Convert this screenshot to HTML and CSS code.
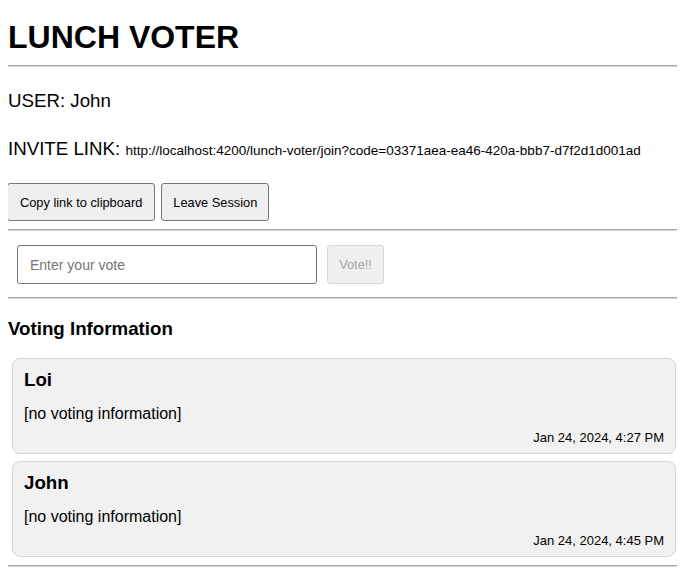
FILE: index.html
```html
<!DOCTYPE html>
<html>
<head>
<meta charset="utf-8">
<title>Lunch Voter</title>
<link rel="stylesheet" href="styles.css">
</head>
<body>
<h1 class="title">LUNCH VOTER</h1>
<hr class="rule rule-top">
<div class="user">USER: John</div>
<div class="invite">INVITE LINK: <span class="invite-url">http://localhost:4200/lunch-voter/join?code=03371aea-ea46-420a-bbb7-d7f2d1d001ad</span></div>
<div class="actions">
  <button class="btn">Copy link to clipboard</button>
  <button class="btn">Leave Session</button>
</div>
<hr class="rule rule-actions">
<form class="vote-form">
  <input class="vote-input" type="text" placeholder="Enter your vote">
  <button class="btn vote-btn" type="button" disabled>Vote!!</button>
</form>
<hr class="rule rule-form">
<h3 class="section-title">Voting Information</h3>
<div class="cards">
  <div class="card">
    <div class="card-name">Loi</div>
    <div class="card-info">[no voting information]</div>
    <div class="card-date">Jan 24, 2024, 4:27 PM</div>
  </div>
  <div class="card">
    <div class="card-name">John</div>
    <div class="card-info">[no voting information]</div>
    <div class="card-date">Jan 24, 2024, 4:45 PM</div>
  </div>
</div>
<hr class="rule rule-bottom">
</body>
</html>
```
FILE: styles.css
```css
html, body {
  background: #ffffff;
}
body {
  margin: 8px;
  font-family: "Liberation Sans", Arial, sans-serif;
  color: #000;
}
.title {
  margin: 11px 0 0;
  font-size: 32px;
  line-height: 37px;
  font-weight: bold;
}
.rule {
  border: 0;
  border-top: 1px solid #a8a8a8;
  border-bottom: 1px solid #d4d4d4;
  height: 0;
  margin: 0;
}
.rule-top { margin-top: 9px; }
.user {
  margin-top: 23px;
  font-size: 18.72px;
  line-height: 22px;
}
.invite {
  margin-top: 26px;
  font-size: 18.72px;
  line-height: 22px;
  height: 22px;
}
.invite-url {
  font-size: 13.5px;
  line-height: 1;
}
.actions {
  display: flex;
  gap: 6px;
  margin-top: 23px;
}
.btn {
  font-family: "Liberation Sans", Arial, sans-serif;
  font-size: 12.8px;
  height: 38px;
  padding: 0 11px;
  background: #efefef;
  border: 1px solid #767676;
  border-radius: 3px;
  color: #000;
}
.actions .btn:first-child { margin-left: -1px; padding: 0 12px; }
.rule-actions { margin-top: 8px; }
.vote-form {
  display: flex;
  gap: 10px;
  margin: 14px 0 0 9px;
}
.vote-input {
  box-sizing: border-box;
  width: 300px;
  height: 39px;
  padding: 0 12px;
  border: 1px solid #767676;
  border-radius: 3px;
  font-family: "Liberation Sans", Arial, sans-serif;
  font-size: 14px;
  margin: 0;
}
.vote-input::placeholder { color: #757575; }
.vote-btn {
  width: 57px;
  height: 39px;
  padding: 0;
  background: #f0f0f0;
  border-color: #d6d6d6;
  color: #a3a3a3;
}
.rule-form { margin-top: 13px; }
.section-title {
  margin: 19px 0 0;
  font-size: 18.72px;
  line-height: 22px;
  font-weight: bold;
}
.cards {
  display: flex;
  flex-direction: column;
  gap: 7px;
  margin: 18px 1px 0 4px;
}
.card {
  background: #f1f1f1;
  border: 1px solid #d6d6d6;
  border-radius: 8px;
  padding: 10px 11px 8px;
}
.card-name {
  font-size: 18.72px;
  line-height: 22px;
  font-weight: bold;
}
.card-info {
  margin-top: 14px;
  font-size: 16px;
  line-height: 18px;
}
.card-date {
  margin-top: 7px;
  font-size: 13px;
  line-height: 15px;
  text-align: right;
}
.rule-bottom { margin-top: 8px; }
```
